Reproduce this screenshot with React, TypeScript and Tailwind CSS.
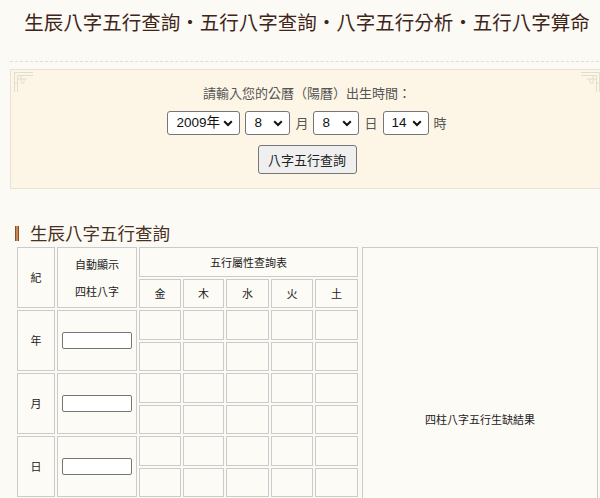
import React from "react";

const CJK = '"Noto Sans CJK TC", "Noto Sans", sans-serif';
const LAT = '"Liberation Sans", "Noto Sans CJK TC", sans-serif';

function Chevron() {
  return (
    <svg width="10" height="7" viewBox="0 0 10 7" className="shrink-0">
      <path d="M1.2 1.3 L5 5 L8.8 1.3" fill="none" stroke="#111" strokeWidth="2" />
    </svg>
  );
}

function FakeSelect({ value, w }: { value: string; w: string }) {
  return (
    <div
      className={`${w} h-[24px] flex items-center justify-between pl-[8px] pr-[6px] bg-white border border-[#767676] rounded-[3px] text-[13.5px] text-[#111]`}
      style={{ fontFamily: LAT }}
    >
      <span>{value}</span>
      <Chevron />
    </div>
  );
}

function Corner({ flip }: { flip?: boolean }) {
  return (
    <svg width="21" height="22" viewBox="0 0 21 22" style={flip ? { transform: "scaleX(-1)" } : undefined}>
      <path
        d="M1.5 21 V1.5 H20 M4.5 21 V4.5 H20 M4.5 8 H14 M8 4.5 V12 M1.5 12 H4.5 M11 8 V12 H8"
        fill="none"
        stroke="#e2ddd2"
        strokeWidth="1"
      />
    </svg>
  );
}

const cell = "border border-[#cbcbcb] bg-[#fdfbf6] flex items-center justify-center text-[11px] text-[#222]";

const rows = ["年", "月", "日", "時"];

export default function App() {
  const sep = <span className="inline-block w-[19.5px] text-center">•</span>;
  return (
    <div className="w-[600px] h-[498px] overflow-hidden bg-[#fcfaf5]" style={{ fontFamily: CJK }}>
      <div className="w-[594px] ml-[10px]">
        <div className="h-[62px] border-b border-dashed border-[#dddddd] pt-[9px]">
          <h1 className="text-center text-[19.5px] leading-[26px] text-[#3f2519] whitespace-nowrap">
            生辰八字五行查詢{sep}五行八字查詢{sep}八字五行分析{sep}五行八字算命
          </h1>
        </div>

        <div className="relative mt-[7px] border border-[#ebe3d2] bg-[#fdf5e6] pt-[14px] pb-[14px] flex flex-col items-center">
          <div className="absolute left-[2px] top-[1px]">
            <Corner />
          </div>
          <div className="absolute right-[2px] top-[1px]">
            <Corner flip />
          </div>
          <div className="text-[13px] leading-[18px] text-[#555]">請輸入您的公曆（陽曆）出生時間：</div>
          <div className="mt-[9px] flex items-center gap-[5px] text-[13px] text-[#555]">
            <FakeSelect value="2009年" w="w-[73px]" />
            <FakeSelect value="8" w="w-[45px]" />
            <span>月</span>
            <FakeSelect value="8" w="w-[46px]" />
            <span>日</span>
            <FakeSelect value="14" w="w-[46px]" />
            <span>時</span>
          </div>
          <button className="mt-[10px] w-[99px] h-[29px] bg-[#efefef] border border-[#767676] rounded-[3px] text-[13px] text-[#222]">
            八字五行查詢
          </button>
        </div>

        <div className="mt-[32px] h-[24px] flex items-center">
          <div className="ml-[5px] w-[4px] h-[15px] bg-gradient-to-r from-[#6e3410] via-[#e6a86a] to-[#6e3410]" />
          <div className="ml-[11px] text-[17.5px] leading-[24px] text-[#4a3122]">生辰八字五行查詢</div>
        </div>

        <div
          className="mt-[2px] ml-[7px] grid gap-x-[2px] gap-y-[2px] grid-cols-[38px_80px_42px_41px_43px_42px_43px_238px] grid-rows-[30px_29px_30px_29px_30px_29px_30px_29px_30px_29px_30px]"
        >
          <div className={`${cell} col-start-1 row-start-1 row-span-2`}>紀</div>
          <div className={`${cell} col-start-2 row-start-1 row-span-2 flex-col leading-[27px]`}>
            <span>自動顯示</span>
            <span>四柱八字</span>
          </div>
          <div className={`${cell} col-start-3 col-span-5 row-start-1`}>五行屬性查詢表</div>
          {["金", "木", "水", "火", "土"].map((t) => (
            <div key={t} className={`${cell} row-start-2`}>{t}</div>
          ))}
          <div className={`${cell} col-start-8 row-start-1 row-span-11 ml-[2px]`}>四柱八字五行生缺結果</div>

          {rows.map((r, i) => (
            <React.Fragment key={r}>
              <div className={`${cell} col-start-1 row-span-2`} style={{ gridRowStart: 3 + i * 2 }}>
                {r}
              </div>
              <div className={`${cell} col-start-2 row-span-2`} style={{ gridRowStart: 3 + i * 2 }}>
                <div className="w-[70px] h-[17px] bg-white border border-[#767676] rounded-[2px]" />
              </div>
              {[0, 1].map((s) =>
                [3, 4, 5, 6, 7].map((c) => (
                  <div
                    key={`${s}-${c}`}
                    className={cell}
                    style={{ gridRowStart: 3 + i * 2 + s, gridColumnStart: c }}
                  />
                ))
              )}
            </React.Fragment>
          ))}
          <div className={`${cell} col-start-1 col-span-2 row-start-11`}>合計</div>
          {[3, 4, 5, 6, 7].map((c) => (
            <div key={c} className={`${cell} row-start-11`} style={{ gridColumnStart: c }} />
          ))}
        </div>
      </div>
    </div>
  );
}
